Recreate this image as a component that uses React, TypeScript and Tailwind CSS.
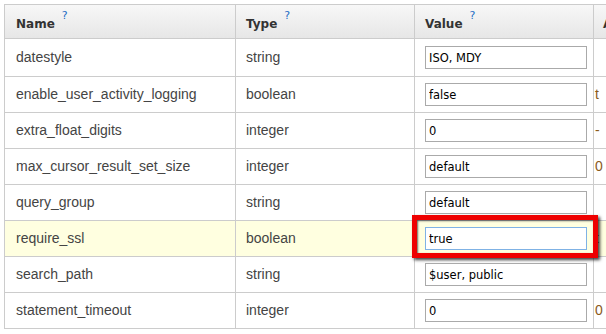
const ROWS = [
  { name: "datestyle", type: "string", value: "ISO, MDY", allowed: "" },
  { name: "enable_user_activity_logging", type: "boolean", value: "false", allowed: "t" },
  { name: "extra_float_digits", type: "integer", value: "0", allowed: "-" },
  { name: "max_cursor_result_set_size", type: "integer", value: "default", allowed: "0" },
  { name: "query_group", type: "string", value: "default", allowed: "" },
  { name: "require_ssl", type: "boolean", value: "true", allowed: "t", active: true },
  { name: "search_path", type: "string", value: "$user, public", allowed: "" },
  { name: "statement_timeout", type: "integer", value: "0", allowed: "0" },
];

function Help() {
  return <sup className="ml-[7px] text-[11px] font-normal text-[#1f6fc5] align-[3px]">?</sup>;
}

export default function App() {
  return (
    <div className="w-[606px] h-[334px] overflow-hidden bg-white pl-[4px] pt-[4px]">
      <table className="table-fixed border-collapse w-[620px] font-['Liberation_Sans',Arial,sans-serif] text-[14px] text-[#444]">
        <colgroup>
          <col className="w-[231px]" />
          <col className="w-[179px]" />
          <col className="w-[179px]" />
          <col className="w-[31px]" />
        </colgroup>
        <thead>
          <tr className="h-[34px] bg-gradient-to-b from-[#f7f7f7] to-[#e6e6e6] font-['DejaVu_Sans',Verdana,sans-serif] text-[12px] font-bold text-[#333]">
            <th className="border border-[#ccc] text-left pl-[11px] pt-[4px]">Name<Help /></th>
            <th className="border border-[#ccc] text-left pl-[10px] pt-[4px]">Type<Help /></th>
            <th className="border border-[#ccc] text-left pl-[10px] pt-[4px]">Value<Help /></th>
            <th className="border border-[#ccc] text-left pl-[9px] pt-[4px]">A</th>
          </tr>
        </thead>
        <tbody>
          {ROWS.map((r, i) => (
            <tr key={r.name} className={`${i === 0 ? "h-[38px]" : "h-[36px]"} ${r.active ? "bg-[#ffffe0]" : ""}`}>
              <td className="border border-[#ccc] pl-[11px] pb-[1px]">{r.name}</td>
              <td className="border border-[#ccc] pl-[10px] pb-[1px]">{r.type}</td>
              <td className="relative border border-[#ccc] pl-[10px]">
                <input
                  readOnly
                  value={r.value}
                  className={`block w-[162px] h-[23px] bg-white border px-[3px] pt-[1px] font-['DejaVu_Sans',Tahoma,sans-serif] text-[11.5px] text-black outline-none ${
                    r.active ? "border-[#7fb2e5]" : "border-[#aaa]"
                  }`}
                />
                {r.active && (
                  <div className="absolute left-[-3px] top-[-6px] w-[186px] h-[43px] border-[5px] border-[#ee0000] shadow-[2px_2px_3px_rgba(0,0,0,0.75),inset_1px_1px_2px_rgba(0,0,0,0.6)] pointer-events-none" />
                )}
              </td>
              <td className="border border-[#ccc] pl-[1px] text-[#8a5a1a] whitespace-nowrap">{r.allowed}</td>
            </tr>
          ))}
        </tbody>
      </table>
    </div>
  );
}
